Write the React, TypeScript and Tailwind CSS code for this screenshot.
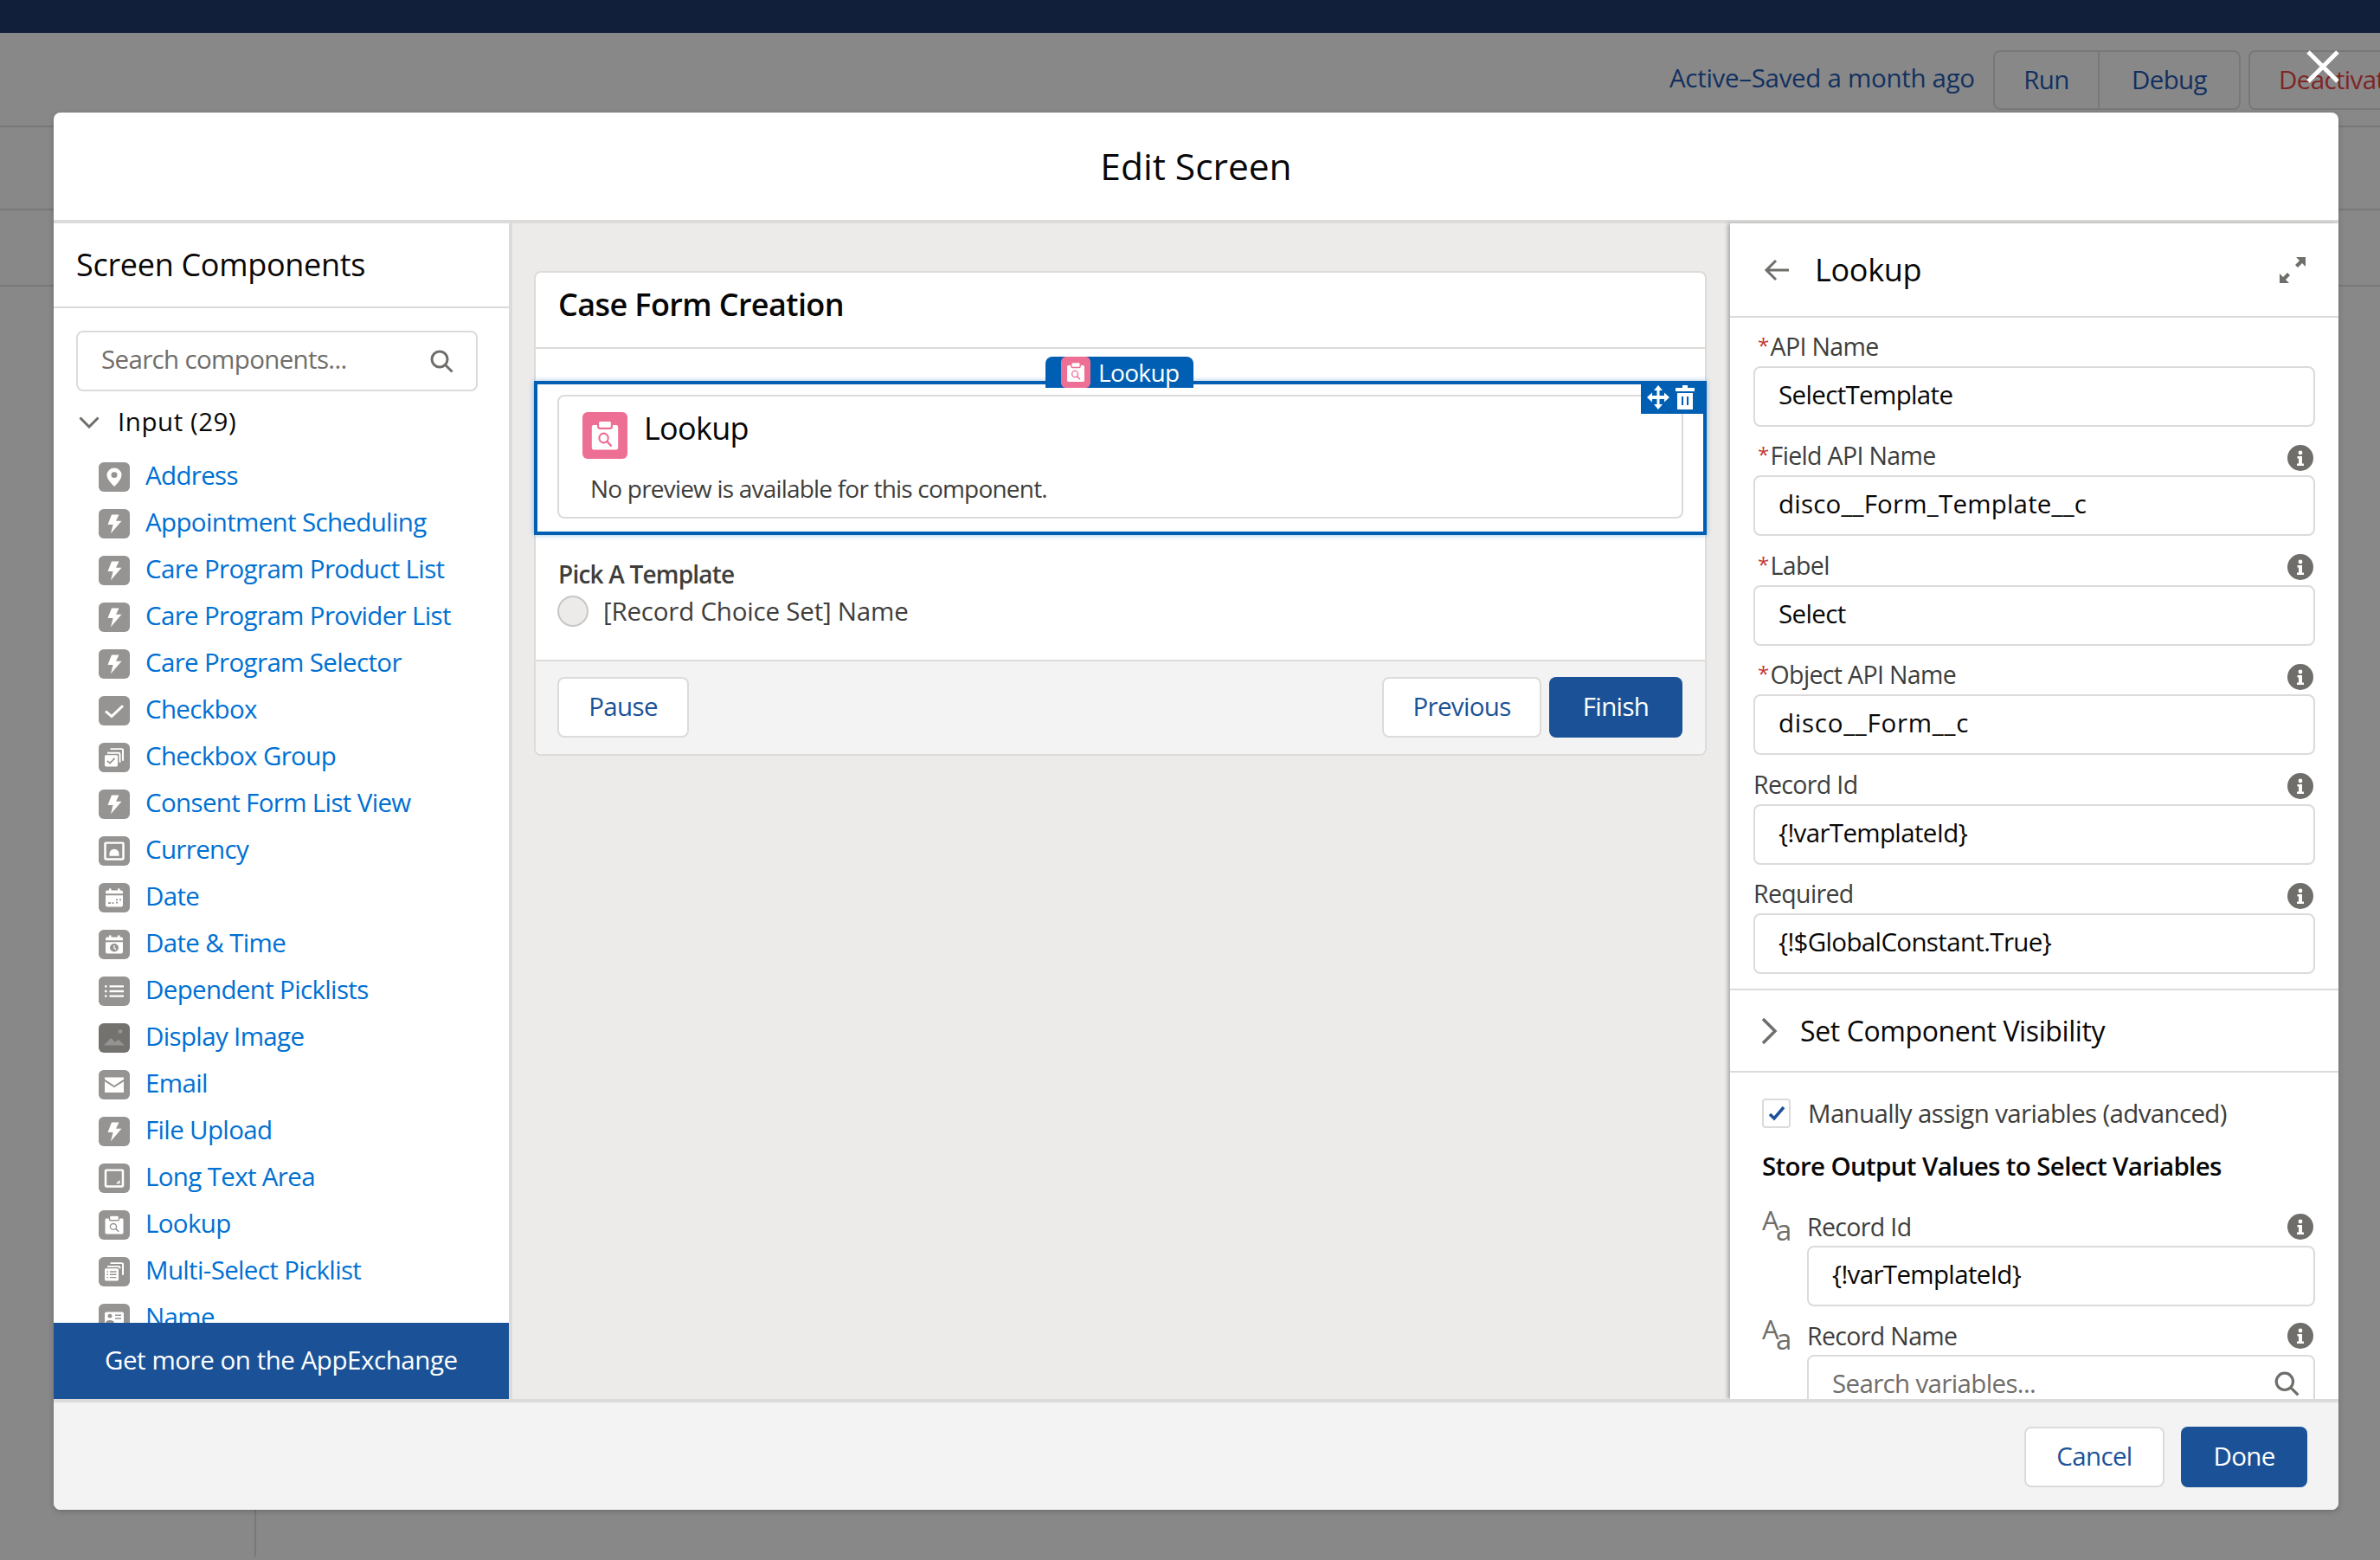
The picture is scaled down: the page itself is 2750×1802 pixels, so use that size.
import React from "react";

const GRAY = "#969492";

// --- ICONS ---

function Bolt() {
  return <path d="M15 7h8.5l-3.5 7.5h6.5L14 30l2.6-11H10.5z" fill="#fff" />;
}

function Clip({ ink }: { ink: string }) {
  return (
    <>
      <path d="M9 10h18a1.5 1.5 0 0 1 1.5 1.5v16A1.5 1.5 0 0 1 27 29H9a1.5 1.5 0 0 1-1.5-1.5v-16A1.5 1.5 0 0 1 9 10z" fill="#fff" />
      <rect x="12.5" y="6.5" width="11" height="6" rx="1.5" fill="#fff" stroke={ink} strokeWidth="1.5" />
      <circle cx="17" cy="20" r="3.6" fill="none" stroke={ink} strokeWidth="1.4" />
      <path d="M19.6 22.6l3.6 3.6" stroke={ink} strokeWidth="1.6" />
    </>
  );
}

function Glyph({ name }: { name: string }) {
  switch (name) {
    case "pin":
      return (
        <>
          <path d="M18 7a8.5 8.5 0 0 0-8.5 8.5C9.500 21.500 18 29.500 18 29.500s8.500-8 8.500-14A8.500 8.500 0 0 0 18 7z" fill="#fff" />
          <circle cx="18" cy="15.500" r="3.500" fill={GRAY} />
        </>
      );
    case "check":
      return <path d="M8 18.500l7 6.500L28 12" fill="none" stroke="#fff" strokeWidth="3" />;
    case "group":
      return (
        <>
          <path d="M13.500 7.500h13a1.500 1.500 0 0 1 1.500 1.500v13" fill="none" stroke="#fff" strokeWidth="2" />
          <path d="M11 11.500h13a1.500 1.500 0 0 1 1.500 1.500v10" fill="none" stroke="#fff" strokeWidth="2" transform="translate(-1 1)" />
          <rect x="7" y="15" width="15" height="14" rx="1.500" fill="#fff" />
          <path d="M10 22l3 3 5.500-6" fill="none" stroke={GRAY} strokeWidth="1.800" />
        </>
      );
    case "currency":
      return (
        <>
          <rect x="7.500" y="8" width="21" height="20" rx="1" fill="none" stroke="#fff" strokeWidth="2.500" />
          <path d="M12.500 24v-3a5.500 5.500 0 0 1 11 0v3z" fill="#fff" />
        </>
      );
    case "date":
    case "datetime":
      return (
        <>
          <path d="M8 15h20v12a2 2 0 0 1-2 2H10a2 2 0 0 1-2-2z" fill="#fff" />
          <path d="M8 13v-2a2 2 0 0 1 2-2h16a2 2 0 0 1 2 2v2z" fill="#fff" />
          <rect x="12" y="6.500" width="2.500" height="4" rx="1" fill="#fff" />
          <rect x="22" y="6.500" width="2.500" height="4" rx="1" fill="#fff" />
          {name === "date" ? (
            <path d="M11 24.500h3M15.500 24.500h2M20 20.500h2M24 20.500h2M20 24h2" stroke={GRAY} strokeWidth="2" />
          ) : (
            <>
              <circle cx="18" cy="22" r="5" fill={GRAY} />
              <path d="M18 19v3.500l2 1.500" fill="none" stroke="#fff" strokeWidth="1.300" />
            </>
          )}
        </>
      );
    case "list":
      return (
        <path d="M7 12h2.500M12.500 12H29M7 18h2.500M12.500 18H29M7 24h2.500M12.500 24H29" stroke="#fff" strokeWidth="2.400" />
      );
    case "image":
      return (
        <>
          <path d="M6 27l8-9 5 5 4-3 7 7z" fill="#969492" />
          <circle cx="25" cy="10" r="2.500" fill="#969492" />
        </>
      );
    case "email":
      return (
        <>
          <path d="M7 9h22v2.500l-11 7.500-11-7.500z" fill="#fff" />
          <path d="M7 14l11 7.500L29 14v13.500H7z" fill="#fff" />
        </>
      );
    case "longtext":
      return (
        <>
          <rect x="8" y="8" width="20" height="20" rx="1" fill="none" stroke="#fff" strokeWidth="2.500" />
          <path d="M24.500 20v4.500H20z" fill="#fff" />
        </>
      );
    case "lookup":
      return <Clip ink={GRAY} />;
    case "multi":
      return (
        <>
          <path d="M13.500 7.500h13a1.500 1.500 0 0 1 1.500 1.500v13" fill="none" stroke="#fff" strokeWidth="2" />
          <path d="M10 11.500h13a1.500 1.500 0 0 1 1.500 1.500v1" fill="none" stroke="#fff" strokeWidth="2" />
          <rect x="7" y="14" width="16" height="15" rx="1.500" fill="#fff" />
          <path d="M9.500 18h1.500M13 18h7.500M9.500 21.500h1.500M13 21.500h7.500M9.500 25h1.500M13 25h7.500" stroke={GRAY} strokeWidth="1.500" />
        </>
      );
    case "name":
      return (
        <>
          <rect x="7" y="10" width="22" height="18" rx="2" fill="#fff" />
          <circle cx="13" cy="15" r="2.500" fill={GRAY} />
          <path d="M9 23c0-3 8-3 8 0zM19 14h7M19 18h7" fill={GRAY} stroke={GRAY} strokeWidth="1.500" />
        </>
      );
    default:
      return <Bolt />;
  }
}

function ItemIcon({ name }: { name: string }) {
  const bg = name === "image" ? "#73726f" : GRAY;
  return (
    <svg width="36" height="34" viewBox="0 0 36 36" preserveAspectRatio="none" className="shrink-0">
      <rect width="36" height="36" rx="6" fill={bg} />
      <Glyph name={name} />
    </svg>
  );
}

function SearchIcon({ size = 28 }: { size?: number }) {
  return (
    <svg width={size} height={size} viewBox="0 0 28 28" fill="none" stroke="#706e6b" strokeWidth="3" className="shrink-0">
      <circle cx="12" cy="12" r="9" />
      <path d="M18.500 18.500L26.500 26.500" />
    </svg>
  );
}

function InfoIcon() {
  return (
    <svg width="30" height="30" viewBox="0 0 30 30" className="shrink-0">
      <circle cx="15" cy="15" r="15" fill="#706e6b" />
      <circle cx="15" cy="9" r="2.400" fill="#fff" />
      <path d="M11.500 13h5.500v8.500h2V24h-8v-2.500h2v-6h-1.500z" fill="#fff" />
    </svg>
  );
}

function TextTypeIcon() {
  return (
    <svg width="34" height="36" viewBox="0 0 34 36" className="shrink-0" fill="#706e6b">
      <text x="0" y="22" fontSize="31">A</text>
      <text x="16" y="34" fontSize="33">a</text>
    </svg>
  );
}

// --- LEFT PANEL ---

const components: [string, string][] = [
  ["Address", "pin"],
  ["Appointment Scheduling", "bolt"],
  ["Care Program Product List", "bolt"],
  ["Care Program Provider List", "bolt"],
  ["Care Program Selector", "bolt"],
  ["Checkbox", "check"],
  ["Checkbox Group", "group"],
  ["Consent Form List View", "bolt"],
  ["Currency", "currency"],
  ["Date", "date"],
  ["Date & Time", "datetime"],
  ["Dependent Picklists", "list"],
  ["Display Image", "image"],
  ["Email", "email"],
  ["File Upload", "bolt"],
  ["Long Text Area", "longtext"],
  ["Lookup", "lookup"],
  ["Multi-Select Picklist", "multi"],
  ["Name", "name"],
];

function ComponentsPanel() {
  return (
    <div className="flex w-[530px] shrink-0 flex-col border-r-4 border-[#dddbda] bg-white">
      <div className="flex h-[98px] shrink-0 items-center border-b-2 border-[#dddbda] pl-[26px] text-[36px] tracking-[-0.3px] text-[#080707]">
        Screen Components
      </div>
      <div className="min-h-0 flex-1 overflow-hidden pl-[26px] pt-[26px]">
        <div className="flex h-[70px] w-[464px] items-center justify-between rounded-lg border-2 border-[#dddbda] pl-[27px] pr-[26px] text-[#706e6b]">
          <span className="pb-[3px]">Search components...</span>
          <SearchIcon />
        </div>
        <div className="flex h-[72px] items-center text-[#080707]">
          <svg width="24" height="14" viewBox="0 0 24 14" fill="none" stroke="#706e6b" strokeWidth="3" className="ml-[3px]">
            <path d="M1.500 1.500L12 12L22.500 1.500" />
          </svg>
          <span className="ml-[21px] pb-[1px] tracking-[0.55px]">Input (29)</span>
        </div>
        <div className="flex flex-col pl-[26px]">
          {components.map(([label, icon]) => (
            <div key={label} className="flex h-[54px] shrink-0 items-center gap-[18px] text-[#0070d2]">
              <ItemIcon name={icon} />
              <span className="pb-[3px]">{label}</span>
            </div>
          ))}
        </div>
      </div>
      <div className="flex h-[88px] shrink-0 items-center bg-[#1b5297] pb-[2px] pl-[59px] tracking-[-0.45px] text-white">
        Get more on the AppExchange
      </div>
    </div>
  );
}

// --- CANVAS ---

function ScreenCanvas() {
  return (
    <div className="min-w-0 flex-1 bg-[#ecebea] pl-[25px] pr-[27px] pt-[55px]">
      <div className="flex h-[560px] flex-col rounded-lg border-2 border-[#dddbda] bg-white">
        <div className="flex h-[88px] shrink-0 items-center border-b-2 border-[#dddbda] pb-[12px] pl-[26px] text-[36px] font-semibold tracking-[-0.6px] text-[#080707]">
          Case Form Creation
        </div>
        <div className="relative -mx-[2px] mt-[37px] h-[178px] shrink-0 border-4 border-[#005fb2] px-[23px] pt-[12px] shadow-[0_0_6px_rgba(0,95,178,0.4)]">
          <div className="flex h-[143px] flex-col rounded-lg border-2 border-[#dddbda] pl-[27px] pt-[18px]">
            <div className="flex items-start gap-[19px]">
              <svg width="52" height="54" viewBox="0 0 36 36" preserveAspectRatio="none">
                <rect width="36" height="36" rx="4" fill="#ee6f94" />
                <Clip ink="#ee6f94" />
              </svg>
              <span className="text-[36px] leading-[38px] tracking-[-0.7px] text-[#080707]">Lookup</span>
            </div>
            <div className="ml-[9px] mt-[16px] text-[28px] leading-[36px] tracking-[-0.8px] text-[#3e3e3c]">
              No preview is available for this component.
            </div>
          </div>
          <div className="absolute left-[587px] top-[-32px] z-10 flex h-[36px] w-[171px] items-center rounded-t-lg bg-[#005fb2] pl-[18px] text-[28px] leading-none text-white">
            <svg width="34" height="36" viewBox="0 0 36 36" preserveAspectRatio="none" className="shrink-0">
              <rect width="36" height="36" rx="6" fill="#ee6f94" />
              <Clip ink="#ee6f94" />
            </svg>
            <span className="ml-[9px]">Lookup</span>
          </div>
          <div className="absolute right-[-4px] top-[-4px] flex h-[38px] w-[76px] items-center gap-[7px] bg-[#005fb2] pl-[7px]">
            <svg width="26" height="28" viewBox="0 0 26 28" fill="#fff">
              <path d="M13 0l5 6h-3.500v6H20V8.500l6 5.500-6 5.500V16h-5.500v6H18l-5 6-5-6h3.500v-6H6v3.500L0 14l6-5.500V12h5.500V6H8z" />
            </svg>
            <svg width="22" height="28" viewBox="0 0 22 28" fill="#fff">
              <path d="M8 0h6v3h8v4H0V3h8zM2 9h18v19H2z" />
              <path d="M8 13v10M14 13v10" stroke="#005fb2" strokeWidth="2" />
            </svg>
          </div>
        </div>
        <div className="h-[144px] shrink-0 pl-[25px] pt-[27px]">
          <div className="ml-[1px] text-[28px] font-semibold leading-[36px] tracking-[-0.8px] text-[#3e3e3c]">Pick A Template</div>
          <div className="mt-[7px] flex items-center gap-[17px] leading-[36px] tracking-[-0.2px] text-[#3e3e3c]">
            <span className="h-[36px] w-[36px] shrink-0 rounded-full border-2 border-[#c9c7c5] bg-[#ecebea]" />
            <span>[Record Choice Set] Name</span>
          </div>
        </div>
        <div className="flex min-h-0 flex-1 items-start justify-between rounded-b-lg border-t-2 border-[#dddbda] bg-[#f3f3f3] pl-[25px] pr-[26px] pt-[18px]">
          <button className="flex h-[70px] w-[152px] items-center justify-center rounded-lg border-2 border-[#dddbda] bg-white pb-[2px] text-[#1b5297]">
            Pause
          </button>
          <div className="flex gap-[9px]">
            <button className="flex h-[70px] w-[184px] items-center justify-center rounded-lg border-2 border-[#dddbda] bg-white pb-[2px] text-[#1b5297]">
              Previous
            </button>
            <button className="flex h-[70px] w-[154px] items-center justify-center rounded-lg bg-[#1b5297] pb-[2px] text-white">
              Finish
            </button>
          </div>
        </div>
      </div>
    </div>
  );
}

// --- PROPERTIES ---

function Field({
  label,
  value,
  required,
  info = true,
  valueClass = "",
}: {
  label: string;
  value: string;
  required?: boolean;
  info?: boolean;
  valueClass?: string;
}) {
  return (
    <div className="mb-[16px]">
      <div className="mb-[4.5px] flex h-[36px] items-center justify-between text-[28.5px] text-[#3e3e3c]">
        <span>
          {required && <span className="relative top-[-3px] ml-[5px] mr-[2px] text-[24px] text-[#c23934]">*</span>}
          {label}
        </span>
        {info && (
          <span className="mr-[2px] mt-[4px]">
            <InfoIcon />
          </span>
        )}
      </div>
      <div className={`flex h-[70px] items-center rounded-lg border-2 border-[#dddbda] pb-[3px] pl-[27px] text-[#080707] ${valueClass}`}>
        {value}
      </div>
    </div>
  );
}

function PropertiesPanel() {
  return (
    <div className="flex w-[703px] shrink-0 flex-col overflow-hidden bg-white shadow-[-3px_0_4px_rgba(0,0,0,0.25)]">
      <div className="flex h-[109px] shrink-0 items-center justify-between border-b-2 border-[#dddbda] pl-[39px] pr-[38px]">
        <div className="flex items-center gap-[29px]">
          <svg width="30" height="26" viewBox="0 0 30 26" fill="none" stroke="#706e6b" strokeWidth="3">
            <path d="M29 13H3M14 2L3 13l11 11" />
          </svg>
          <span className="text-[36px] tracking-[-0.3px] text-[#080707]">Lookup</span>
        </div>
        <svg width="30" height="30" viewBox="0 0 30 30" fill="#706e6b">
          <path d="M19 0h11v11l-4-4-5 5-3-3 5-5zM11 30H0V19l4 4 5-5 3 3-5 5z" />
        </svg>
      </div>
      <div className="shrink-0 px-[27px] pb-[1px] pt-[15px]">
        <Field label="API Name" value="SelectTemplate" required info={false} />
        <Field label="Field API Name" value="disco__Form_Template__c" required valueClass="tracking-[0.2px]" />
        <Field label="Label" value="Select" required />
        <Field label="Object API Name" value="disco__Form__c" required valueClass="tracking-[0.75px]" />
        <Field label="Record Id" value="{!varTemplateId}" />
        <Field label="Required" value="{!$GlobalConstant.True}" />
      </div>
      <div className="flex h-[97px] shrink-0 items-center border-y-2 border-[#dddbda] pl-[35px] text-[#080707]">
        <svg width="20" height="32" viewBox="0 0 20 32" fill="none" stroke="#706e6b" strokeWidth="3.500">
          <path d="M3 2l14 14L3 30" />
        </svg>
        <span className="ml-[26px] text-[32px] tracking-[-0.4px]">Set Component Visibility</span>
      </div>
      <div className="pl-[37px] pr-[27px] pt-[29px]">
        <div className="flex h-[36px] items-center text-[#3e3e3c]">
          <span className="flex h-[34px] w-[33px] shrink-0 items-center justify-center rounded border-2 border-[#dddbda]">
            <svg width="20" height="18" viewBox="0 0 20 18" fill="none" stroke="#1b5297" strokeWidth="3.500">
              <path d="M2 10l5 5L18 2" />
            </svg>
          </span>
          <span className="ml-[20px]">Manually assign variables (advanced)</span>
        </div>
        <div className="mt-[21px] h-[36px] font-semibold text-[#080707]">Store Output Values to Select Variables</div>
        <div className="mt-[38px] flex gap-[18px]">
          <TextTypeIcon />
          <div className="flex-1">
            <div className="flex h-[36px] items-center justify-between text-[28.5px] text-[#3e3e3c]">
              <span>Record Id</span>
              <span className="mr-[2px]">
                <InfoIcon />
              </span>
            </div>
            <div className="mt-[4px] flex h-[70px] items-center rounded-lg border-2 border-[#dddbda] pb-[3px] pl-[27px] text-[#080707]">
              {"{!varTemplateId}"}
            </div>
          </div>
        </div>
        <div className="mt-[16px] flex gap-[18px]">
          <TextTypeIcon />
          <div className="flex-1">
            <div className="flex h-[36px] items-center justify-between text-[28.5px] text-[#3e3e3c]">
              <span>Record Name</span>
              <span className="mr-[2px]">
                <InfoIcon />
              </span>
            </div>
            <div className="mt-[4px] flex h-[70px] items-center justify-between rounded-lg border-2 border-[#dddbda] pb-[4px] pl-[27px] pr-[16px] text-[#706e6b]">
              <span>Search variables...</span>
              <SearchIcon size={30} />
            </div>
          </div>
        </div>
      </div>
    </div>
  );
}

// --- PAGE ---

export default function App() {
  return (
    <div className="relative h-[1802px] w-[2750px] overflow-hidden bg-[#888888] font-['Open_Sans',sans-serif] text-[29.5px] tracking-[-0.65px]">
      <div className="h-[38px] bg-[#111f3a]" />
      <div className="flex h-[109px] items-start border-b-2 border-[#787878] pl-[1929px] pt-[20px]">
        <span className="mt-[10px] w-[374px] shrink-0 whitespace-nowrap tracking-[-0.3px] text-[#12305f]">Active–Saved a month ago</span>
        <div className="flex h-[69px] shrink-0 rounded-lg border-2 border-[#787878]">
          <span className="flex w-[121px] items-center justify-center border-r-2 border-[#787878] text-[#12305f]">Run</span>
          <span className="flex w-[161px] items-center justify-center text-[#12305f]">Debug</span>
        </div>
        <div className="ml-[9px] flex h-[69px] w-[220px] shrink-0 items-center rounded-lg border-2 border-[#787878] pl-[33px] text-[#7e2525]">
          Deactivate
        </div>
      </div>
      <div className="h-[96px] border-b-2 border-[#787878]" />
      <div className="h-[88px] border-b-2 border-[#787878]" />
      <div className="ml-[294px] h-[1467px] border-l-2 border-[#787878]" />

      <svg width="38" height="38" viewBox="0 0 38 38" className="absolute left-[2665px] top-[58px] z-10" stroke="#fff" strokeWidth="5">
        <path d="M2 2l34 34M36 2L2 36" />
      </svg>

      <div className="absolute left-[62px] top-[130px] flex h-[1614px] w-[2640px] flex-col overflow-hidden rounded-lg bg-white shadow-[0_2px_6px_rgba(0,0,0,0.2)]">
        <div className="flex h-[128px] shrink-0 items-center justify-center border-b-4 border-[#dddbda] text-[42.5px] tracking-normal text-[#080707]">
          Edit Screen
        </div>
        <div className="flex min-h-0 flex-1">
          <ComponentsPanel />
          <ScreenCanvas />
          <PropertiesPanel />
        </div>
        <div className="flex h-[128px] shrink-0 items-start justify-end gap-[19px] border-t-4 border-[#dddbda] bg-[#f3f3f3] pr-[36px] pt-[28px]">
          <button className="flex h-[70px] w-[162px] items-center justify-center rounded-lg border-2 border-[#dddbda] bg-white pb-[2px] text-[#1b5297]">
            Cancel
          </button>
          <button className="flex h-[70px] w-[146px] items-center justify-center rounded-lg bg-[#1b5297] pb-[2px] text-white">
            Done
          </button>
        </div>
      </div>
    </div>
  );
}
